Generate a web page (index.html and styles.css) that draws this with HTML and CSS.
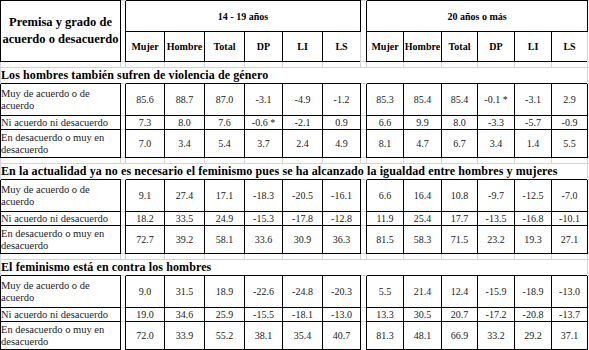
FILE: index.html
```html
<!DOCTYPE html>
<html lang="es">
<head>
    <meta charset="UTF-8">
    <title>Premisas sobre feminismo por grupo de edad</title>
    <link rel="stylesheet" href="styles.css">
</head>
<body>
    <table class="sheet">
        <colgroup>
            <col class="w-label">
            <col class="w-gap">
            <col class="w-39"><col class="w-40"><col class="w-40"><col class="w-38"><col class="w-40"><col class="w-38">
            <col class="w-gap2">
            <col class="w-37"><col class="w-38"><col class="w-36"><col class="w-37"><col class="w-37"><col class="w-36">
            <col class="w-end">
        </colgroup>

        <!-- encabezado -->
        <tr class="head-top">
            <th class="premise" rowspan="2">Premisa y grado de acuerdo o desacuerdo</th>
            <td class="grid" rowspan="2"></td>
            <th class="group" colspan="6">14 - 19 años</th>
            <td class="grid" rowspan="2"></td>
            <th class="group" colspan="6">20 años o más</th>
            <td class="grid" rowspan="2"></td>
        </tr>
        <tr class="head-cols">
            <th class="col">Mujer</th><th class="col">Hombre</th><th class="col">Total</th>
            <th class="col">DP</th><th class="col">LI</th><th class="col">LS</th>
            <th class="col">Mujer</th><th class="col">Hombre</th><th class="col">Total</th>
            <th class="col">DP</th><th class="col">LI</th><th class="col">LS</th>
        </tr>

        <!-- bloque 1 -->
        <tr class="gap-row">
            <td class="grid"></td><td class="grid"></td>
            <td class="grid"></td><td class="grid"></td><td class="grid"></td><td class="grid"></td><td class="grid"></td><td class="grid"></td>
            <td class="grid"></td>
            <td class="grid"></td><td class="grid"></td><td class="grid"></td><td class="grid"></td><td class="grid"></td><td class="grid"></td>
            <td class="grid"></td>
        </tr>
        <tr class="title-row">
            <td class="title" colspan="15">Los hombres también sufren de violencia de género</td>
            <td class="grid"></td>
        </tr>
        <tr class="row-a">
            <td class="label">Muy de acuerdo o de acuerdo</td><td class="grid"></td>
            <td class="num">85.6</td><td class="num">88.7</td><td class="num">87.0</td><td class="num">-3.1</td><td class="num">-4.9</td><td class="num">-1.2</td>
            <td class="grid"></td>
            <td class="num">85.3</td><td class="num">85.4</td><td class="num">85.4</td><td class="num">-0.1 *</td><td class="num">-3.1</td><td class="num">2.9</td>
            <td class="grid"></td>
        </tr>
        <tr class="row-b">
            <td class="label">Ni acuerdo ni desacuerdo</td><td class="grid"></td>
            <td class="num">7.3</td><td class="num">8.0</td><td class="num">7.6</td><td class="num">-0.6 *</td><td class="num">-2.1</td><td class="num">0.9</td>
            <td class="grid"></td>
            <td class="num">6.6</td><td class="num">9.9</td><td class="num">8.0</td><td class="num">-3.3</td><td class="num">-5.7</td><td class="num">-0.9</td>
            <td class="grid"></td>
        </tr>
        <tr class="row-c">
            <td class="label">En desacuerdo o muy en desacuerdo</td><td class="grid"></td>
            <td class="num">7.0</td><td class="num">3.4</td><td class="num">5.4</td><td class="num">3.7</td><td class="num">2.4</td><td class="num">4.9</td>
            <td class="grid"></td>
            <td class="num">8.1</td><td class="num">4.7</td><td class="num">6.7</td><td class="num">3.4</td><td class="num">1.4</td><td class="num">5.5</td>
            <td class="grid"></td>
        </tr>

        <!-- bloque 2 -->
        <tr class="gap-row">
            <td class="grid"></td><td class="grid"></td>
            <td class="grid"></td><td class="grid"></td><td class="grid"></td><td class="grid"></td><td class="grid"></td><td class="grid"></td>
            <td class="grid"></td>
            <td class="grid"></td><td class="grid"></td><td class="grid"></td><td class="grid"></td><td class="grid"></td><td class="grid"></td>
            <td class="grid"></td>
        </tr>
        <tr class="title-row">
            <td class="title" colspan="15">En la actualidad ya no es necesario el feminismo pues se ha alcanzado la igualdad entre hombres y mujeres</td>
            <td class="grid"></td>
        </tr>
        <tr class="row-a">
            <td class="label">Muy de acuerdo o de acuerdo</td><td class="grid"></td>
            <td class="num">9.1</td><td class="num">27.4</td><td class="num">17.1</td><td class="num">-18.3</td><td class="num">-20.5</td><td class="num">-16.1</td>
            <td class="grid"></td>
            <td class="num">6.6</td><td class="num">16.4</td><td class="num">10.8</td><td class="num">-9.7</td><td class="num">-12.5</td><td class="num">-7.0</td>
            <td class="grid"></td>
        </tr>
        <tr class="row-b">
            <td class="label">Ni acuerdo ni desacuerdo</td><td class="grid"></td>
            <td class="num">18.2</td><td class="num">33.5</td><td class="num">24.9</td><td class="num">-15.3</td><td class="num">-17.8</td><td class="num">-12.8</td>
            <td class="grid"></td>
            <td class="num">11.9</td><td class="num">25.4</td><td class="num">17.7</td><td class="num">-13.5</td><td class="num">-16.8</td><td class="num">-10.1</td>
            <td class="grid"></td>
        </tr>
        <tr class="row-c">
            <td class="label">En desacuerdo o muy en desacuerdo</td><td class="grid"></td>
            <td class="num">72.7</td><td class="num">39.2</td><td class="num">58.1</td><td class="num">33.6</td><td class="num">30.9</td><td class="num">36.3</td>
            <td class="grid"></td>
            <td class="num">81.5</td><td class="num">58.3</td><td class="num">71.5</td><td class="num">23.2</td><td class="num">19.3</td><td class="num">27.1</td>
            <td class="grid"></td>
        </tr>

        <!-- bloque 3 -->
        <tr class="gap-row">
            <td class="grid"></td><td class="grid"></td>
            <td class="grid"></td><td class="grid"></td><td class="grid"></td><td class="grid"></td><td class="grid"></td><td class="grid"></td>
            <td class="grid"></td>
            <td class="grid"></td><td class="grid"></td><td class="grid"></td><td class="grid"></td><td class="grid"></td><td class="grid"></td>
            <td class="grid"></td>
        </tr>
        <tr class="title-row">
            <td class="title" colspan="15">El feminismo está en contra los hombres</td>
            <td class="grid"></td>
        </tr>
        <tr class="row-a">
            <td class="label">Muy de acuerdo o de acuerdo</td><td class="grid"></td>
            <td class="num">9.0</td><td class="num">31.5</td><td class="num">18.9</td><td class="num">-22.6</td><td class="num">-24.8</td><td class="num">-20.3</td>
            <td class="grid"></td>
            <td class="num">5.5</td><td class="num">21.4</td><td class="num">12.4</td><td class="num">-15.9</td><td class="num">-18.9</td><td class="num">-13.0</td>
            <td class="grid"></td>
        </tr>
        <tr class="row-b">
            <td class="label">Ni acuerdo ni desacuerdo</td><td class="grid"></td>
            <td class="num">19.0</td><td class="num">34.6</td><td class="num">25.9</td><td class="num">-15.5</td><td class="num">-18.1</td><td class="num">-13.0</td>
            <td class="grid"></td>
            <td class="num">13.3</td><td class="num">30.5</td><td class="num">20.7</td><td class="num">-17.2</td><td class="num">-20.8</td><td class="num">-13.7</td>
            <td class="grid"></td>
        </tr>
        <tr class="row-c">
            <td class="label">En desacuerdo o muy en desacuerdo</td><td class="grid"></td>
            <td class="num">72.0</td><td class="num">33.9</td><td class="num">55.2</td><td class="num">38.1</td><td class="num">35.4</td><td class="num">40.7</td>
            <td class="grid"></td>
            <td class="num">81.3</td><td class="num">48.1</td><td class="num">66.9</td><td class="num">33.2</td><td class="num">29.2</td><td class="num">37.1</td>
            <td class="grid"></td>
        </tr>
    </table>
</body>
</html>
```

FILE: styles.css
```css
body {
    margin: 0;
    background: #fff;
    font-family: "Liberation Serif", "Times New Roman", serif;
    color: #000;
}
.sheet {
    border-collapse: collapse;
    table-layout: fixed;
    width: 589px;
}
.sheet th,
.sheet td {
    padding: 0;
    overflow: hidden;
}
.w-label { width: 120px; }
.w-gap { width: 5px; }
.w-gap2 { width: 6px; }
.w-36 { width: 36px; }
.w-37 { width: 37px; }
.w-38 { width: 38px; }
.w-39 { width: 39px; }
.w-40 { width: 40px; }
.w-end { width: 2px; }

/* celdas con borde negro */
.premise,
.group,
.col,
.label,
.num {
    border: 1px solid #000;
}
/* líneas de la cuadrícula */
.grid,
.title {
    border-top: 1px solid #d4d4d4;
    border-left: 1px solid #d4d4d4;
}

.head-top { height: 31px; }
.head-cols { height: 30px; }
.gap-row { height: 6px; }
.title-row { height: 16px; }
.row-a { height: 32px; }
.row-b { height: 14px; }
.row-c { height: 28px; }

.premise {
    font-size: 12.5px;
    font-weight: bold;
    line-height: 17px;
    padding: 0 6px;
    text-align: center;
}
.group {
    font-size: 10px;
    font-weight: bold;
    text-align: center;
}
.col {
    font-size: 10px;
    font-weight: bold;
    text-align: center;
}
.title {
    font-size: 12px;
    font-weight: bold;
    letter-spacing: 0.1px;
    white-space: nowrap;
    padding-left: 2px;
    text-align: left;
    vertical-align: bottom;
}
.label {
    font-size: 10.5px;
    line-height: 12px;
    padding-left: 2px;
    color: #222;
    text-align: left;
    vertical-align: middle;
}
.num {
    font-size: 10px;
    color: #222;
    text-align: center;
    vertical-align: middle;
    white-space: nowrap;
}
```
